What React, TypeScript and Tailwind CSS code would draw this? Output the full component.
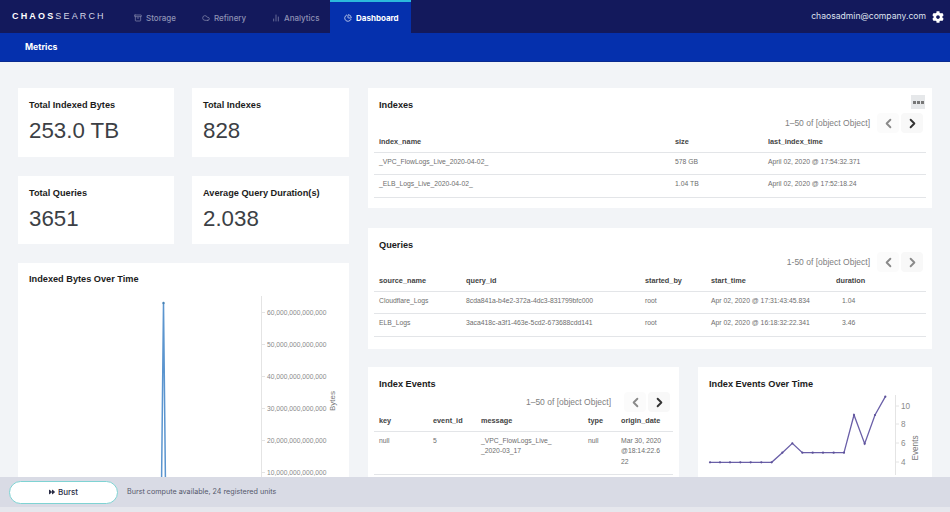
import React from "react";
import { Archive, Cloud, ChartNoAxesColumn, ChartPie, ChevronLeft, ChevronRight } from "lucide-react";
import { FaCog, FaForward } from "react-icons/fa";

const nav = "font-['Inter',sans-serif]";
const helv = "font-['Liberation_Sans',Arial,sans-serif]";

function Stat({ title, value }: { title: string; value: string }) {
  return (
    <div className="bg-white h-full pl-[11px] pt-[11px]">
      <div className="text-[9.2px] leading-[12px] font-bold text-[#1c1c1c]">{title}</div>
      <div className="text-[22.3px] leading-[28px] mt-[6px] text-[#3c3f45]">{value}</div>
    </div>
  );
}

function Pager({ next = true, dash = "–", tight = false }: { next?: boolean; dash?: string; tight?: boolean }) {
  return (
    <div className="flex items-center justify-end h-[24px] gap-[2px] -mr-[2px]">
      <span className={`text-[8.5px] text-[#808080] ${tight ? "mr-[11px]" : "mr-[5px]"}`}>1{dash}50 of [object Object]</span>
      <span className="w-[22px] h-[20px] flex items-center justify-center rounded-sm bg-[#fbfbfb]">
        <ChevronLeft size={15} strokeWidth={3} className="text-[#8a8a8a]" />
      </span>
      <span className="w-[22px] h-[20px] flex items-center justify-center rounded-sm bg-[#f8f8f8]">
        <ChevronRight size={15} strokeWidth={3} className={next ? "text-[#333]" : "text-[#8a8a8a]"} />
      </span>
    </div>
  );
}

function Grid({
  cols,
  head,
  rows,
  rowH,
}: {
  cols: string;
  head: string[];
  rows: React.ReactNode[][];
  rowH: string;
}) {
  return (
    <div className="mx-[-5px]">
      <div className={`grid ${cols} h-[17.5px] border-b border-[#e3e5e8] pl-[5px] text-[7.3px] leading-[14px] font-bold text-[#444]`}>
        {head.map((h) => (
          <div key={h}>{h}</div>
        ))}
      </div>
      {rows.map((r, i) => (
        <div key={i} className={`grid ${cols} ${rowH} border-b border-[#e3e5e8] pl-[5px] pt-[4px] text-[6.8px] leading-[10.5px] text-[#6e6e6e]`}>
          {r.map((c, j) => (
            <div key={j}>{c}</div>
          ))}
        </div>
      ))}
    </div>
  );
}

const events: [number, number][] = [
  [60, 322], [90, 322], [120, 322], [151, 322], [182, 322], [214, 322], [245, 322], [277, 293], [307, 265],
  [337, 293], [368, 293], [399, 293], [431, 293], [462, 293], [492, 180], [524, 266], [555, 180], [586, 125],
];

function BytesChart() {
  const labels = ["60", "50", "40", "30", "20", "10"];
  return (
    <svg width="331" height="190" className="block mt-[11px]">
      <line x1="243.5" y1="0" x2="243.5" y2="190" stroke="#e4e4e4" />
      {labels.map((l, i) => (
        <g key={l}>
          <line x1="243.5" x2="247" y1={16.5 + i * 32} y2={16.5 + i * 32} stroke="#e4e4e4" />
          <text x="249" y={19 + i * 32} fontSize="6.7" fill="#8a8a8a">{l},000,000,000,000</text>
        </g>
      ))}
      <text transform="translate(317,105) rotate(-90)" textAnchor="middle" fontSize="8" fill="#777">Bytes</text>
      <polyline points="143.5,190 145.5,7 147.5,190" fill="none" stroke="#5b95cf" strokeWidth="1.5" />
      <circle cx="145.5" cy="7" r="1.2" fill="#4682b4" />
    </svg>
  );
}

function EventsChart() {
  const labels: [string, number][] = [["10", 411], ["8", 429], ["6", 448], ["4", 467]];
  return (
    <svg width="234" height="80" className="block">
      <line x1="197.5" y1="0" x2="197.5" y2="80" stroke="#e4e4e4" />
      {labels.map(([l, y]) => (
        <g key={l}>
          <line x1="197.5" x2="201" y1={y - 400} y2={y - 400} stroke="#e4e4e4" />
          <text x="203" y={y - 397} fontSize="8.2" fill="#8a8a8a">{l}</text>
        </g>
      ))}
      <text transform="translate(220,53) rotate(-90)" textAnchor="middle" fontSize="8.2" fill="#777">Events</text>
      <polyline points={events.map(([x, y]) => `${x / 3 - 8},${y / 3 - 40}`).join(" ")} fill="none" stroke="#6a5fa8" strokeWidth="1.3" />
      {events.map(([x, y]) => (
        <circle key={x} cx={x / 3 - 8} cy={y / 3 - 40} r="1.1" fill="#5c5199" />
      ))}
    </svg>
  );
}

export default function App() {
  return (
    <div className={`relative w-[950px] h-[512px] overflow-hidden bg-[#f2f4f7] ${helv}`}>
      <header className="h-[33px] bg-[#13195c] flex items-stretch text-white">
        <div className="w-[134px] pl-[12px] flex items-center text-[9px] tracking-[0.24em] whitespace-nowrap">
          <span className="font-bold">CHAOS</span>
          <span className="font-light text-[#d5d7e6]">SEARCH</span>
        </div>
        <nav className={`flex flex-1 items-stretch text-[8px] font-medium text-[#8e91b4] ${nav}`}>
          <div className="w-[68px] flex items-center gap-[4px] pt-[2px]"><Archive size={8} />Storage</div>
          <div className="w-[70px] flex items-center gap-[4px] pt-[2px]"><Cloud size={8} />Refinery</div>
          <div className="w-[58px] flex items-center gap-[4px] pt-[2px]"><ChartNoAxesColumn size={8} />Analytics</div>
          <div className="w-[81px] pl-[14px] flex items-center gap-[4px] bg-[#0530ad] border-t-2 border-[#2bb9dc] text-white font-bold"><ChartPie size={8} />Dashboard</div>
        </nav>
        <div className={`flex items-center gap-[6px] pr-[6px] text-[8.6px] text-[#dfe1ee] ${nav}`}>
          <span>chaosadmin@company.com</span>
          <FaCog size={12} className="text-white" />
        </div>
      </header>
      <div className={`h-[29px] bg-[#0530ad] border-b border-[#0a2a90] pl-[25px] pt-[1px] flex items-center text-[8.7px] font-bold text-white ${nav}`}>
        Metrics
      </div>

      <main className="flex gap-[19px] pl-[18px] pt-[26px]">
        <div className="w-[331px] shrink-0">
          <div className="grid grid-cols-[156px_157px] grid-rows-[69px_68px] gap-x-[18px] gap-y-[19px]">
            <Stat title="Total Indexed Bytes" value="253.0 TB" />
            <Stat title="Total Indexes" value="828" />
            <Stat title="Total Queries" value="3651" />
            <Stat title="Average Query Duration(s)" value="2.038" />
          </div>
          <div className="bg-white mt-[19px] h-[260px] pt-[10px]">
            <div className="pl-[11px] text-[9.2px] leading-[12px] font-bold text-[#1c1c1c]">Indexed Bytes Over Time</div>
            <BytesChart />
          </div>
        </div>

        <div className="w-[564px] shrink-0">
          <section className="bg-white h-[120px] px-[11px] pt-[11px] relative">
            <h2 className="text-[9.2px] leading-[12px] font-bold text-[#1c1c1c]">Indexes</h2>
            <div className="absolute top-[7px] right-[7px] w-[14px] h-[14px] bg-[#e6e8ea] flex items-center justify-center gap-[1px]">
              <i className="w-[3px] h-[3px] bg-[#777]" /><i className="w-[3px] h-[3px] bg-[#777]" /><i className="w-[3px] h-[3px] bg-[#777]" />
            </div>
            <Pager />
            <Grid
              cols="grid-cols-[296px_93px_1fr]"
              rowH="h-[22.5px]"
              head={["index_name", "size", "last_index_time"]}
              rows={[
                ["_VPC_FlowLogs_Live_2020-04-02_", "578 GB", "April 02, 2020 @ 17:54:32.371"],
                ["_ELB_Logs_Live_2020-04-02_", "1.04 TB", "April 02, 2020 @ 17:52:18.24"],
              ]}
            />
          </section>

          <section className="bg-white h-[121px] mt-[20px] px-[11px] pt-[11px]">
            <h2 className="text-[9.2px] leading-[12px] font-bold text-[#1c1c1c] mb-[-1px]">Queries</h2>
            <Pager next={false} dash="-" />
            <Grid
              cols="grid-cols-[87px_179px_66px_125px_1fr]"
              rowH="h-[22.5px]"
              head={["source_name", "query_id", "started_by", "start_time", "duration"]}
              rows={[
                ["Cloudflare_Logs", "8cda841a-b4e2-372a-4dc3-831799bfc000", "root", "Apr 02, 2020 @ 17:31:43:45.834", <span className="pl-[6px]">1.04</span>],
                ["ELB_Logs", "3aca418c-a3f1-463e-5cd2-673688cdd141", "root", "Apr 02, 2020 @ 16:18:32:22.341", <span className="pl-[6px]">3.46</span>],
              ]}
            />
          </section>

          <div className="flex gap-[19px] mt-[18px]">
            <section className="bg-white w-[311px] h-[160px] px-[11px] pt-[11px]">
              <h2 className="text-[9.2px] leading-[12px] font-bold text-[#1c1c1c]">Index Events</h2>
              <Pager tight />
              <Grid
                cols="grid-cols-[54px_48px_107px_33px_1fr]"
                rowH="h-[43px]"
                head={["key", "event_id", "message", "type", "origin_date"]}
                rows={[[
                  "null",
                  "5",
                  <>_VPC_FlowLogs_Live_<br />_2020-03_17</>,
                  "null",
                  <>Mar 30, 2020<br />@18:14:22.6<br />22</>,
                ]]}
              />
            </section>
            <section className="bg-white w-[234px] h-[160px] pt-[11px]">
              <h2 className="pl-[11px] text-[9.2px] leading-[12px] font-bold text-[#1c1c1c] mb-[5px]">Index Events Over Time</h2>
              <EventsChart />
            </section>
          </div>
        </div>
      </main>

      <footer className={`absolute left-0 right-0 top-[477px] h-[35px] bg-[#d9dbe5] border-b-[5px] border-[#e6e7ed] flex items-center pl-[9px] gap-[9px] ${nav}`}>
        <button className="w-[109px] h-[23px] rounded-full bg-white border border-[#7fd3d3] flex items-center justify-center gap-[3px] text-[8px] font-medium text-[#2a2d45]">
          <FaForward size={6} />Burst
        </button>
        <span className="text-[7.2px] text-[#55586c]">Burst compute available, 24 registered units</span>
      </footer>
    </div>
  );
}
